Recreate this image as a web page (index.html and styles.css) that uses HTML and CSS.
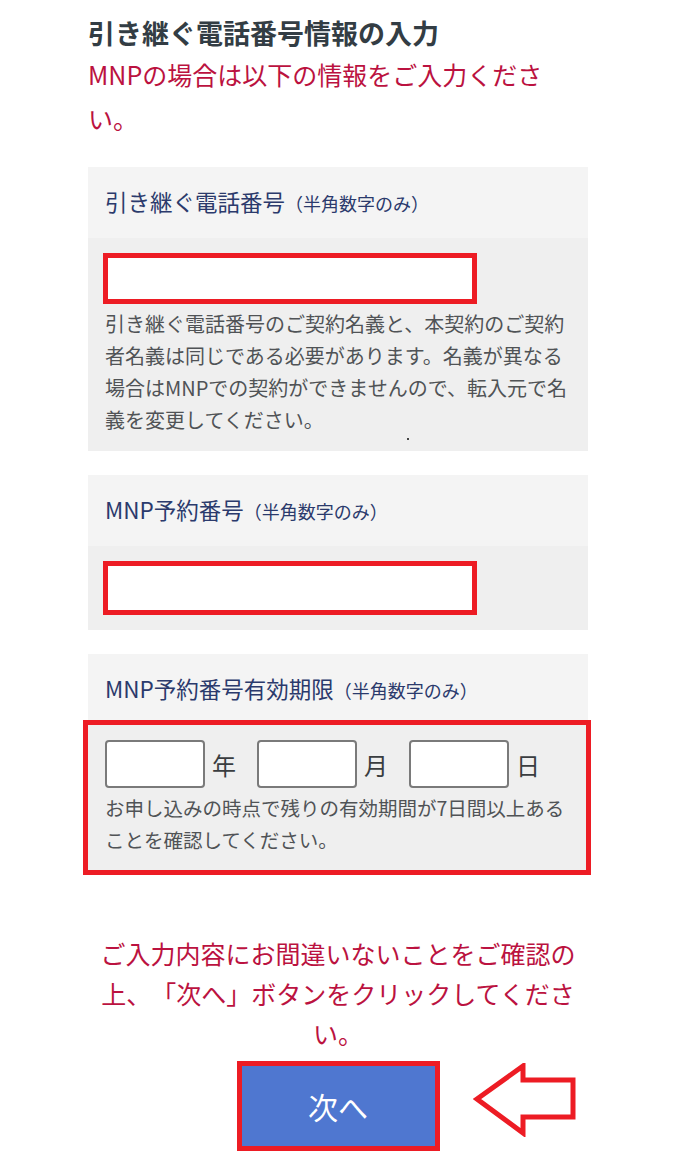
FILE: index.html
```html
<!DOCTYPE html>
<html lang="ja">
<head>
  <meta charset="UTF-8">
  <title>引き継ぐ電話番号情報の入力</title>
  <meta name="viewport" content="width=device-width, initial-scale=1">
  <link rel="stylesheet" href="styles.css">
</head>
<body>
  <div class="page">
    <h2>引き継ぐ電話番号情報の入力</h2>
    <p class="lead">MNPの場合は以下の情報をご入力ください。</p>

    <div class="field">
      <div class="field-label">引き継ぐ電話番号<small>（半角数字のみ）</small></div>
      <div class="field-body">
        <input type="text" class="text-input short" />
        <p class="note">引き継ぐ電話番号のご契約名義と、本契約のご契約者名義は同じである必要があります。名義が異なる場合はMNPでの契約ができませんので、転入元で名義を変更してください。</p>
        <span class="stray-dot"></span>
      </div>
    </div>

    <div class="field">
      <div class="field-label">MNP予約番号<small>（半角数字のみ）</small></div>
      <div class="field-body">
        <input type="text" class="text-input" />
      </div>
    </div>

    <div class="field">
      <div class="field-label">MNP予約番号有効期限<small>（半角数字のみ）</small></div>
      <div class="field-body marked-body">
        <div class="date-row">
          <input type="text" class="date-input" /><span class="date-unit">年</span>
          <input type="text" class="date-input" /><span class="date-unit">月</span>
          <input type="text" class="date-input" /><span class="date-unit">日</span>
        </div>
        <p class="note date-note">お申し込みの時点で残りの有効期間が7日間以上あることを確認してください。</p>
      </div>
    </div>

    <p class="confirm">ご入力内容にお間違いないことをご確認の上、「次へ」ボタンをクリックしてください。</p>

    <div class="next-row">
      <button class="next-btn">次へ</button>
      <svg class="arrow" viewBox="0 0 104 74" xmlns="http://www.w3.org/2000/svg">
        <polygon points="4,36 50,3 50,17 100,17 100,54 50,54 50,70" fill="none" stroke="#ed1c24" stroke-width="5" stroke-linejoin="miter"/>
      </svg>
    </div>
  </div>
</body>
</html>
```

FILE: styles.css
```css
body {
  margin: 0;
  background: #fff;
  font-family: "Noto Sans CJK JP", "Noto Sans", sans-serif;
  text-spacing-trim: space-all;
}
.page {
  width: 500px;
  margin-left: 88px;
  padding-bottom: 20px;
}
h2 {
  margin: 15px 0 0;
  font-size: 27px;
  line-height: 35px;
  font-weight: bold;
  color: #333d44;
}
.lead {
  margin: 2px 0 27px;
  font-size: 25px;
  line-height: 44px;
  color: #bb1240;
}
.field {
  margin-bottom: 24px;
}
.field-label {
  background: #f4f4f4;
  padding: 18px 17px;
  font-size: 22.5px;
  line-height: 33px;
  color: #2b3a6c;
}
.field-label small {
  font-size: 18px;
}
.field-body {
  position: relative;
  background: #efefef;
  padding: 15px 16px 15px 15px;
}
.text-input {
  display: block;
  box-sizing: border-box;
  width: 374px;
  height: 54px;
  background: #fff;
  border: 5px solid #ed1c24;
  border-radius: 0;
  outline: none;
}
.text-input.short {
  height: 51px;
}
.note {
  margin: 4px 0 0 2px;
  font-size: 20px;
  line-height: 32px;
  color: #505356;
}
.stray-dot {
  position: absolute;
  left: 319px;
  bottom: 11px;
  width: 2px;
  height: 2px;
  background: #444;
}
.marked-body {
  border: 5px solid #ed1c24;
  margin: -5px -3px 0 -5px;
  padding: 15px 6px 14px 17px;
}
.date-note {
  margin-left: 0;
  font-size: 19.5px;
}
.date-row {
  display: flex;
  align-items: center;
}
.date-input {
  box-sizing: border-box;
  width: 100px;
  height: 48px;
  background: #fff;
  border: 2px solid #7a7a7a;
  border-radius: 4px;
  outline: none;
}
.date-unit {
  margin: 0 21px 0 7px;
  font-size: 24px;
  color: #3a3d40;
}
.confirm {
  margin: 58px 0 8px;
  text-align: center;
  font-size: 25px;
  line-height: 40px;
  color: #bb1240;
}
.next-row {
  position: relative;
  display: flex;
  justify-content: center;
}
.next-btn {
  box-sizing: border-box;
  width: 203px;
  height: 90px;
  background: #4f77d0;
  border: 5px solid #ed1c24;
  color: #fff;
  font-family: "Noto Sans CJK JP", sans-serif;
  font-size: 30px;
  cursor: pointer;
}
.arrow {
  position: absolute;
  left: 385px;
  top: 2px;
  width: 104px;
  height: 74px;
}
```
